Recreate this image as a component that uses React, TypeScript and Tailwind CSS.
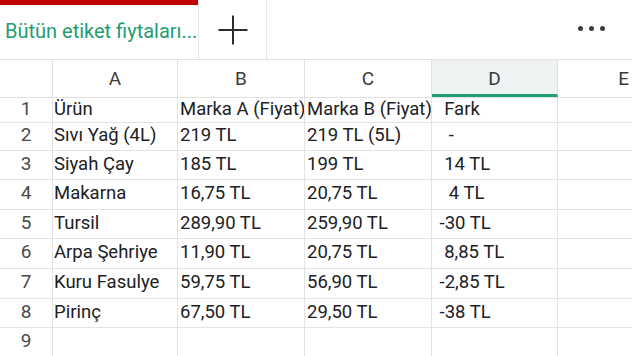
const cols = ["A", "B", "C", "D", "E"];
const widths = ["w-[53px]", "w-[125px]", "w-[127px]", "w-[127px]", "w-[126px]"];

const rows: { h: string; cells: string[] }[] = [
  { h: "h-[25px]", cells: ["Ürün", "Marka A (Fiyat)", "Marka B (Fiyat)", "  Fark"] },
  { h: "h-[28px]", cells: ["Sıvı Yağ (4L)", "219 TL", "219 TL (5L)", "   -"] },
  { h: "h-[29px]", cells: ["Siyah Çay", "185 TL", "199 TL", "  14 TL"] },
  { h: "h-[30px]", cells: ["Makarna", "16,75 TL", "20,75 TL", "   4 TL"] },
  { h: "h-[29px]", cells: ["Tursil", "289,90 TL", "259,90 TL", " -30 TL"] },
  { h: "h-[30px]", cells: ["Arpa Şehriye", "11,90 TL", "20,75 TL", "  8,85 TL"] },
  { h: "h-[30px]", cells: ["Kuru Fasulye", "59,75 TL", "56,90 TL", " -2,85 TL"] },
  { h: "h-[29px]", cells: ["Pirinç", "67,50 TL", "29,50 TL", " -38 TL"] },
  { h: "h-[30px]", cells: ["", "", "", ""] },
];

export default function App() {
  return (
    <div className="w-[632px] h-[356px] overflow-hidden bg-white font-['Roboto',sans-serif] text-[#202124]">
      {/* tab bar */}
      <div className="flex h-[60px] border-b border-[#e3e3e3]">
        <div className="w-[199px] flex flex-col border-r border-[#e6e6e6]">
          <div className="h-[5px] bg-[#c00000]" />
          <div className="flex-1 flex items-center pl-[5px] pb-[2px] text-[20px] text-[#1f9d74] whitespace-nowrap">
            Bütün etiket fiytaları...
          </div>
        </div>
        <div className="w-[68px] flex items-center justify-center border-r border-[#e6e6e6]">
          <svg width="30" height="30" viewBox="0 0 30 30">
            <path d="M15 0.5V29.5M0.5 15H29.5" stroke="#2d2d2d" strokeWidth="2" />
          </svg>
        </div>
        <div className="flex-1 flex items-center justify-end pr-[27px] gap-[6px] pb-[2px]">
          <span className="w-[5px] h-[5px] rounded-full bg-[#3c3c3c]" />
          <span className="w-[5px] h-[5px] rounded-full bg-[#3c3c3c]" />
          <span className="w-[5px] h-[5px] rounded-full bg-[#3c3c3c]" />
        </div>
      </div>

      {/* column headers */}
      <div className="flex h-[38px] border-b border-[#e0e0e0]">
        <div className={`${widths[0]} shrink-0 border-r border-[#e0e0e0]`} />
        {cols.map((c, i) => (
          <div
            key={c}
            className={`${i < 4 ? widths[i + 1] + " shrink-0 border-r" : "flex-1"} border-[#e0e0e0] flex items-center justify-center text-[19px] text-[#3a3a3a] pt-[2px] ${
              c === "D" ? "bg-[#eef2f2] border-b-[3px] border-b-[#1f9d74] pt-[5px]" : ""
            } ${c === "E" ? "justify-end pr-[3px]" : ""}`}
          >
            {c}
          </div>
        ))}
      </div>

      {/* body */}
      {rows.map((r, ri) => (
        <div key={ri} className={`flex ${r.h} border-b border-[#e3e3e3]`}>
          <div className={`${widths[0]} shrink-0 border-r border-[#e3e3e3] flex items-center justify-center text-[19px] text-[#4a4a4a] pb-[2px]`}>
            {ri + 1}
          </div>
          {r.cells.map((t, ci) => (
            <div
              key={ci}
              className={`${widths[ci + 1]} shrink-0 border-r border-[#e3e3e3] flex items-center text-[18.5px] whitespace-pre overflow-hidden pb-[1px] ${
                ci === 0 ? "pl-[1px]" : ci === 3 ? "pl-[3px]" : "pl-[2px]"
              }`}
            >
              {t}
            </div>
          ))}
          <div className="flex-1" />
        </div>
      ))}
    </div>
  );
}
